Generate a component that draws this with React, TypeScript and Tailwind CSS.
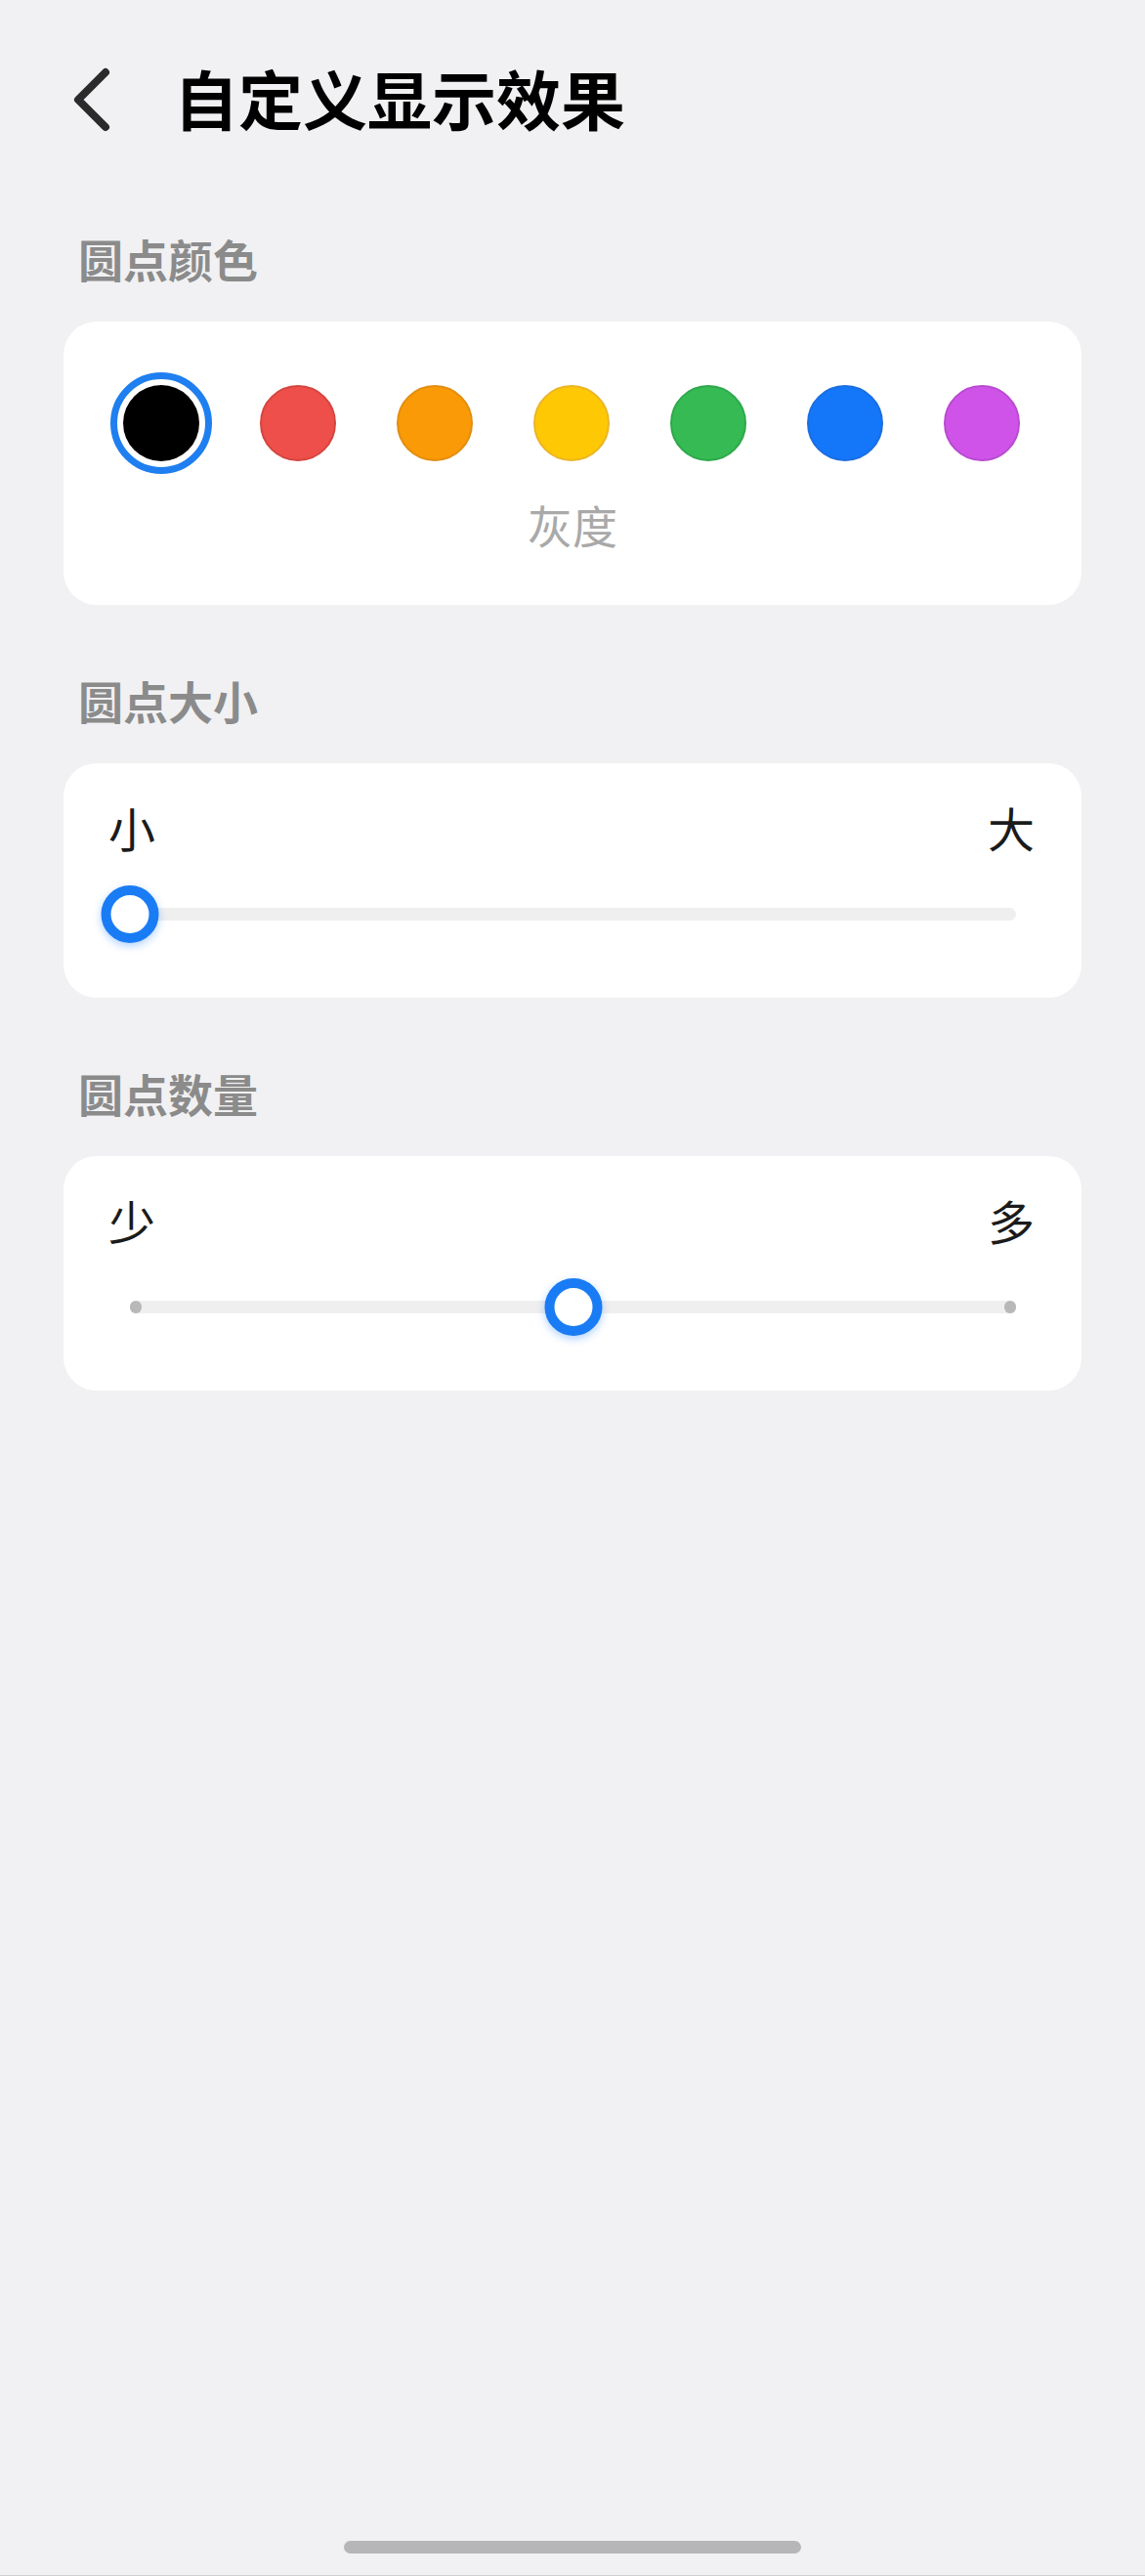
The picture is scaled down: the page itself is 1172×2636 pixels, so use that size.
import React from "react";

const FONT = { fontFamily: '"Noto Sans CJK SC", "Noto Sans", sans-serif' };

const colors = [
  { c: "bg-[#000000]", b: "border-transparent" },
  { c: "bg-[#ee4f4a]", b: "border-[#d4463f]" },
  { c: "bg-[#fa9a06]", b: "border-[#e28e10]" },
  { c: "bg-[#ffc804]", b: "border-[#ebb526]" },
  { c: "bg-[#36bb54]", b: "border-[#2ea84b]" },
  { c: "bg-[#1477fa]", b: "border-[#1b6ee0]" },
  { c: "bg-[#cf53e9]", b: "border-[#b94bd0]" },
];

function SectionLabel({ text, top }: { text: string; top: string }) {
  return (
    <div className={`${top} mb-[42px] pl-[15px] text-[46px] leading-[46px] font-semibold text-[#8b8b8b]`}>
      {text}
    </div>
  );
}

function Slider({ pct, dots }: { pct: number; dots?: boolean }) {
  return (
    <div className="relative ml-[68px] mr-[67px] h-[59px]">
      <div className="absolute left-0 right-0 top-[23px] h-[13px] rounded-full bg-[#efefef]" />
      {dots && (
        <>
          <div className="absolute left-[0px] top-[23px] h-[13px] w-[12px] rounded-full bg-[#b8b8b8]" />
          <div className="absolute right-[0px] top-[23px] h-[13px] w-[12px] rounded-full bg-[#b8b8b8]" />
        </>
      )}
      <div
        className="absolute top-0 h-[59px] w-[59px] -translate-x-1/2 rounded-full border-[10px] border-[#1a7cf5] bg-white shadow-[0_3px_8px_rgba(26,124,245,0.35)]"
        style={{ left: `${pct}%` }}
      />
    </div>
  );
}

function SliderCard({ left, right, pct, dots }: { left: string; right: string; pct: number; dots?: boolean }) {
  return (
    <div className="rounded-[34px] bg-white pt-[42px] pb-[56px]">
      <div className="flex justify-between pl-[46px] pr-[48px] text-[48px] leading-[46px] text-[#1b1b1b]">
        <span>{left}</span>
        <span>{right}</span>
      </div>
      <div className="mt-[37px]">
        <Slider pct={pct} dots={dots} />
      </div>
    </div>
  );
}

export default function App() {
  return (
    <div className="flex min-h-[2636px] w-full flex-col bg-[#f1f1f3]" style={FONT}>
      <div className="flex h-[134px] items-start pt-[67px]">
        <div className="ml-[72px] mt-[3px] flex h-[64px] w-[48px] items-center">
          <svg width="48" height="70" viewBox="0 0 48 70">
            <path d="M36 7 L8 35 L36 63" fill="none" stroke="#2b2b2b" strokeWidth="8" strokeLinecap="round" strokeLinejoin="round" />
          </svg>
        </div>
        <div className="ml-[58px] text-[66px] leading-[64px] font-bold text-black">自定义显示效果</div>
      </div>

      <div className="px-[65px]">
        <SectionLabel text="圆点颜色" top="mt-[107px]" />
        <div className="rounded-[34px] bg-white pt-[52px] pb-[60px]">
          <div className="flex justify-between pl-[48px] pr-[50px]">
            {colors.map((col, i) => (
              <div key={i} className="flex h-[104px] w-[104px] items-center justify-center">
                {i === 0 ? (
                  <div className="flex h-[104px] w-[104px] items-center justify-center rounded-full border-[7px] border-[#1f7ff0]">
                    <div className={`h-[78px] w-[78px] rounded-full ${col.c}`} />
                  </div>
                ) : (
                  <div className={`h-[78px] w-[78px] rounded-full border-2 ${col.c} ${col.b}`} />
                )}
              </div>
            ))}
          </div>
          <div className="mt-[28px] text-center text-[46px] leading-[46px] text-[#a9a9a9]">灰度</div>
        </div>

        <SectionLabel text="圆点大小" top="mt-[74px]" />
        <SliderCard left="小" right="大" pct={0} />

        <SectionLabel text="圆点数量" top="mt-[74px]" />
        <SliderCard left="少" right="多" pct={50} dots />
      </div>

      <div className="flex-1" />
      <div className="flex justify-center border-b border-[#cfcfd1] pb-[22px]">
        <div className="h-[13px] w-[468px] rounded-full bg-[#b6b6b8]" />
      </div>
    </div>
  );
}
